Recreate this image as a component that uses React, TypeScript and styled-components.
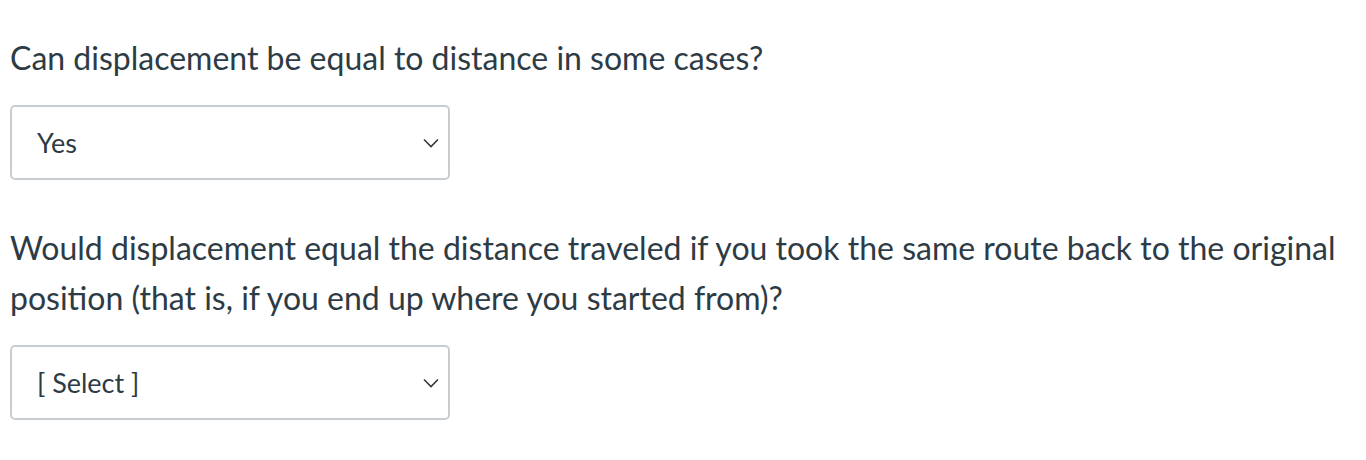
import React from "react";
import styled, { createGlobalStyle } from "styled-components";

const GlobalStyle = createGlobalStyle`
  html, body {
    margin: 0;
    padding: 0;
    background: #ffffff;
  }
  body {
    font-family: Lato, "Noto Sans", sans-serif;
    color: #2d3b45;
  }
`;

const Page = styled.div`
  padding: 33px 20px 0 10px;
  display: flex;
  flex-direction: column;
`;

const Question = styled.div`
  display: flex;
  flex-direction: column;
  margin-bottom: 43px;
`;

const Prompt = styled.p`
  margin: 0 0 22px;
  font-size: 32px;
  line-height: 50px;
  color: #2d3b45;
`;

const SelectWrap = styled.div`
  position: relative;
  width: 440px;
`;

const Dropdown = styled.select`
  appearance: none;
  -webkit-appearance: none;
  width: 100%;
  height: 75px;
  box-sizing: border-box;
  padding: 0 50px 0 25px;
  border: 2px solid #c7cdd1;
  border-radius: 5px;
  background: #ffffff;
  font-family: Lato, "Noto Sans", sans-serif;
  font-size: 27px;
  color: #2d3b45;
  outline: none;
`;

const Chevron = styled.svg`
  position: absolute;
  right: 11px;
  top: 50%;
  transform: translateY(-50%);
  width: 16px;
  height: 10px;
  pointer-events: none;
`;

type QuestionItem = {
  id: string;
  text: string;
  value: string;
};

const questions: QuestionItem[] = [
  {
    id: "q1",
    text: "Can displacement be equal to distance in some cases?",
    value: "Yes",
  },
  {
    id: "q2",
    text:
      "Would displacement equal the distance traveled if you took the same route back to the original position (that is, if you end up where you started from)?",
    value: "",
  },
];

function AnswerSelect({ value }: { value: string }) {
  return (
    <SelectWrap>
      <Dropdown defaultValue={value}>
        <option value="">[ Select ]</option>
        <option value="Yes">Yes</option>
        <option value="No">No</option>
      </Dropdown>
      <Chevron viewBox="0 0 16 10" fill="none">
        <path d="M1 1.5 L8 8.5 L15 1.5" stroke="#2d3b45" strokeWidth="1.6" />
      </Chevron>
    </SelectWrap>
  );
}

export default function App() {
  return (
    <>
      <GlobalStyle />
      <Page>
        {questions.map((q) => (
          <Question key={q.id}>
            <Prompt>{q.text}</Prompt>
            <AnswerSelect value={q.value} />
          </Question>
        ))}
      </Page>
    </>
  );
}
